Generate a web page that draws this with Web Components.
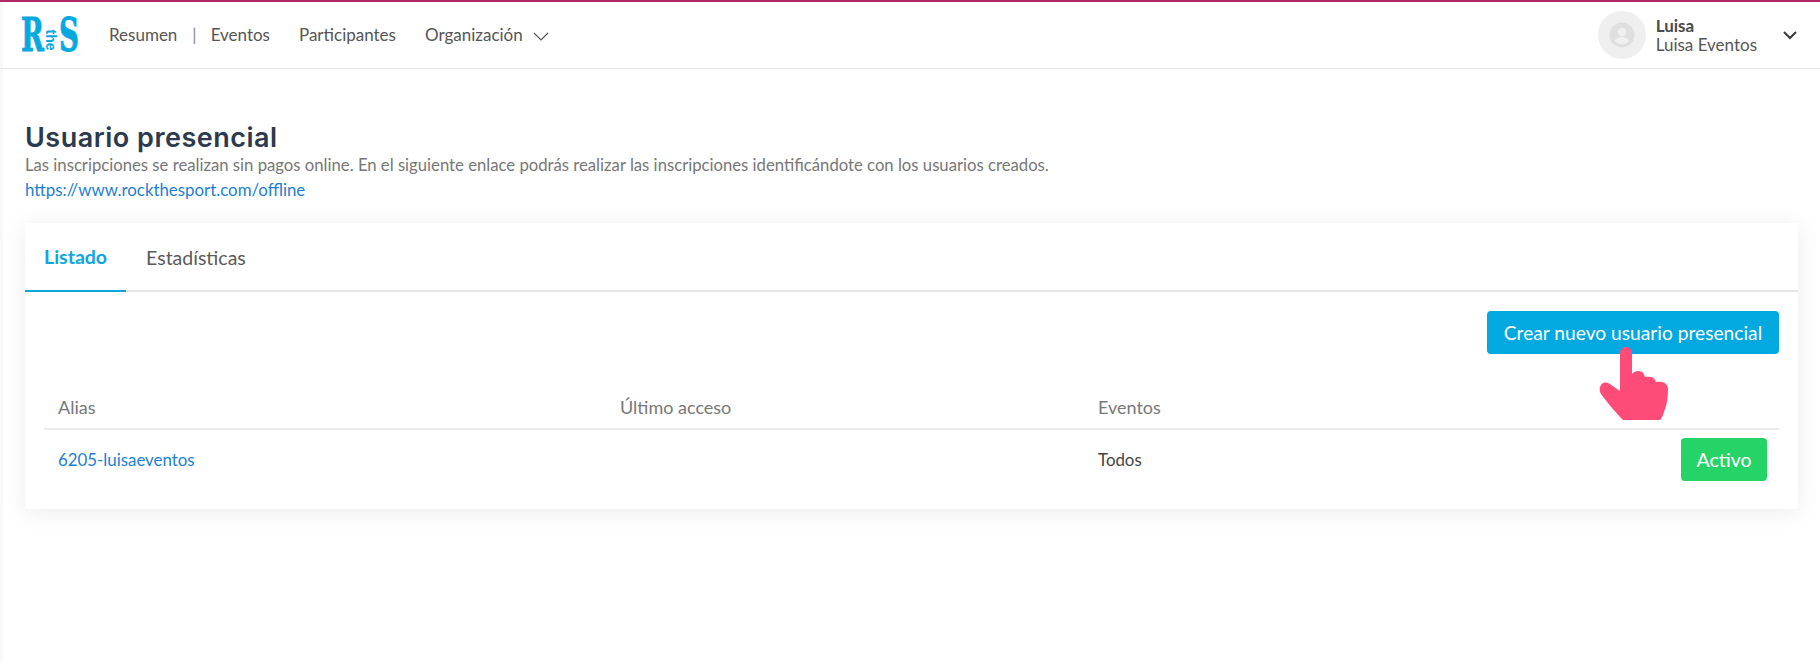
<!DOCTYPE html>
<html lang="es">
<head>
<meta charset="utf-8">
<title>Usuario presencial</title>
<style>
html,body{margin:0;height:100%;}
body{font-family:Lato,"Noto Sans",sans-serif;background:#fff;color:#4a4a4a;box-shadow:inset 3px 0 #f8f8f8;}
</style>
</head>
<body>
<top-bar></top-bar>
<page-head></page-head>
<user-card></user-card>

<script>
class TopBar extends HTMLElement{
    constructor(){
        super();
        let shadowRoot = this.attachShadow({mode:'open'});
        shadowRoot.innerHTML=`
        <style>
            :host{display:flex;align-items:center;box-sizing:border-box;height:69px;border-top:2px solid #b02a66;border-bottom:1px solid #e6e6e6;padding:0 23px 0 21px;font-size:17px;color:#555;}
            .logo{display:flex;align-items:center;width:58px;height:36px;color:#05a9e0;margin-right:30px;}
            .logo b{display:block;width:21px;font:700 46px/36px "DejaVu Serif",serif;transform:scaleX(.6);transform-origin:left center;-webkit-text-stroke:1px #05a9e0;}
            .logo i{display:block;width:17px;font:700 14px/14px "Liberation Sans",sans-serif;font-style:normal;transform:rotate(90deg);text-align:center;margin-top:6px;}
            nav{display:flex;align-items:center;margin-top:-2px;}
            nav span{white-space:nowrap;}
            .sep{margin:0 14px 0 15px;color:#888;}
            .gap{margin-left:29px;}
            .chev{margin-left:10px;margin-top:5px;}
            .user{margin-left:auto;display:flex;align-items:center;}
            .avatar{width:48px;height:48px;border-radius:50%;background:#efefef;display:flex;align-items:center;justify-content:center;margin-right:10px;}
            .names{line-height:19px;}
            .names b{display:block;color:#4a4a4a;}
            .down{margin-left:26px;}
        </style>
        <div class="logo"><b>R</b><i>the</i><b>S</b></div>
        <nav>
            <span>Resumen</span><span class="sep">|</span><span>Eventos</span>
            <span class="gap">Participantes</span>
            <span class="gap">Organización</span>
            <svg class="chev" width="16" height="9" viewBox="0 0 16 9" fill="none" stroke="#555" stroke-width="1.2"><path d="M1 1l7 7 7-7"/></svg>
        </nav>
        <div class="user">
            <div class="avatar">
                <svg width="26" height="26" viewBox="0 0 26 26"><circle cx="13" cy="13" r="12.5" fill="#dfdfdf"/><circle cx="13" cy="10" r="4.2" fill="#efefef"/><path d="M5.5 19c1.5-3 4.500-4 7.500-4s6 1 7.500 4c-1.800 2-4.500 3.200-7.500 3.200S7.300 21 5.500 19z" fill="#efefef"/></svg>
            </div>
            <div class="names"><b>Luisa</b>Luisa Eventos</div>
            <svg class="down" width="14" height="9" viewBox="0 0 14 9" fill="none" stroke="#3a3a3a" stroke-width="2"><path d="M1 1l6 6 6-6"/></svg>
        </div>`;
    }
}

class PageHead extends HTMLElement{
    constructor(){
        super();
        let shadowRoot = this.attachShadow({mode:'open'});
        shadowRoot.innerHTML=`
        <style>
            :host{display:block;padding:53px 25px 0;}
            h1{margin:0;font:600 27px/31px Inter,"Open Sans",sans-serif;color:#2c3a4f;letter-spacing:.5px;}
            p{margin:0;font-size:16.7px;line-height:24px;color:#777;}
            a{display:block;font-size:16.85px;line-height:26px;color:#1c7fd6;text-decoration:none;}
        </style>
        <h1>Usuario presencial</h1>
        <p>Las inscripciones se realizan sin pagos online. En el siguiente enlace podrás realizar las inscripciones identificándote con los usuarios creados.</p>
        <a href="#">https://www.rockthesport.com/offline</a>`;
    }
}

class UserCard extends HTMLElement{
    constructor(){
        super();
        let shadowRoot = this.attachShadow({mode:'open'});
        shadowRoot.innerHTML=`
        <style>
            :host{display:block;position:relative;box-sizing:border-box;height:286px;margin:20px 22px 0 25px;background:#fff;box-shadow:0 3px 22px rgba(0,0,0,.08);font-size:16.85px;}
            .tabs{display:flex;height:67px;border-bottom:2px solid #e6e6e6;box-sizing:content-box;font-size:19.5px;}
            .tabs span{display:flex;align-items:center;padding:0 19px;margin-bottom:-2px;color:#5a5a5a;}
            .tabs .on{color:#0fa6de;font-weight:700;border-bottom:2px solid #0fa6de;}
            .tabs .on + span{padding-left:20px;}
            .tools{display:flex;justify-content:flex-end;padding:19px 19px 0;}
            button{font:400 19.200px Lato,sans-serif;color:#fff;border:0;border-radius:4px;background:#01a9e0;height:43px;width:292px;padding:0;}
            .row,.head{display:grid;grid-template-columns:562px 478px 1fr auto;margin:0 19px;align-items:center;padding-left:14px;}
            .head{margin-top:31px;height:43px;border-bottom:2px solid #ebebeb;font-size:18px;color:#777;}
            .row{height:58px;color:#444;padding-right:12px;}
            .row a{color:#1c7fd6;text-decoration:none;}
            .row em{font-style:normal;font-size:19.500px;color:#fff;background:#25d366;border-radius:4px;width:86px;height:43px;display:flex;align-items:center;justify-content:center;}
            .hand{position:absolute;left:1575px;top:124px;overflow:visible;}
        </style>
        <div class="tabs"><span class="on">Listado</span><span>Estadísticas</span></div>
        <div class="tools"><button>Crear nuevo usuario presencial</button></div>
        <div class="head"><span>Alias</span><span>Último acceso</span><span>Eventos</span></div>
        <div class="row"><a href="#">6205-luisaeventos</a><span></span><span>Todos</span><em>Activo</em></div>
        <svg class="hand" width="70" height="74" viewBox="0 0 70 74"><path fill="#ff4b78" d="M20 6C20 2.500 23 0 26 0C29 0 32 2.500 32 6V27C33 25 36 24 39 24C42 24 44 26 45 30C47 29.500 49 29.500 51 30C53 30.500 55 32 56 35C58 34.500 60 34.500 62 35C65 35.500 68 38 68 42C68 50 67 58 64 65C63 68 62 71 60 73H23C16 66 7 55 1 47C-1 44-.5 40 1.500 37.500C3.500 35 7 35 9 36.500L20 44Z"/></svg>`;
    }
}

customElements.define('top-bar',TopBar);
customElements.define('page-head',PageHead);
customElements.define('user-card',UserCard);
</script>
</body>
</html>
